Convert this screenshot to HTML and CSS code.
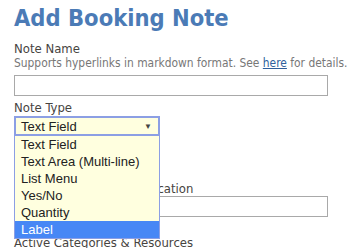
FILE: index.html
```html
<!DOCTYPE html>
<html>
<head>
<meta charset="utf-8">
<link rel="stylesheet" href="styles.css">
</head>
<body>
<div class="page">
  <h1 class="title">Add Booking Note</h1>
  <div class="field">
    <div class="label">Note Name</div>
    <div class="hint">Supports hyperlinks in markdown format. See <a class="link" href="#">here</a> for details.</div>
    <div class="input"></div>
  </div>
  <div class="field field-type">
    <div class="label">Note Type</div>
    <div class="select-wrap">
      <div class="select"><span>Text Field</span><span class="arrow">&#9660;</span></div>
      <ul class="options">
        <li>Text Field</li>
        <li>Text Area (Multi-line)</li>
        <li>List Menu</li>
        <li>Yes/No</li>
        <li>Quantity</li>
        <li class="active">Label</li>
      </ul>
    </div>
  </div>
  <div class="field check-row">
    <span class="box"></span><span class="label">Required</span>
  </div>
  <div class="field field-app">
    <div class="label">Show on Customer Application</div>
    <div class="input"></div>
  </div>
  <div class="field field-active">
    <div class="label">Active Categories &amp; Resources</div>
  </div>
</div>
</body>
</html>
```
FILE: styles.css
```css
html, body {
  margin: 0;
  padding: 0;
  background: #ffffff;
}
.page {
  padding: 4px 0 0 14px;
  font-family: "DejaVu Sans Condensed", "DejaVu Sans", sans-serif;
  color: #545454;
}
.title {
  margin: 0;
  font-size: 23.5px;
  line-height: 29px;
  font-weight: bold;
  color: #4b7bb6;
}
.field {
  margin-top: 8px;
}
.label {
  font-size: 13px;
  line-height: 15px;
  color: #47443f;
  white-space: nowrap;
}
.hint {
  font-size: 11.9px;
  line-height: 14px;
  color: #777777;
  margin-bottom: 5px;
  white-space: nowrap;
}
.link {
  color: #2f5f9c;
  text-decoration: underline;
}
.input {
  width: 312px;
  height: 19px;
  border: 1px solid #a9a9a9;
  background: #fff;
}
.field-type {
  margin-top: 4px;
}
.select-wrap {
  position: relative;
  width: 146px;
  margin-top: 1px;
}
.select {
  box-sizing: border-box;
  height: 20px;
  border: 2px solid #8c9fe4;
  background: #ffffdf;
  display: flex;
  justify-content: space-between;
  align-items: center;
  padding: 0 6px 0 5px;
  font-family: "Liberation Sans", Arial, sans-serif;
  font-size: 13px;
  color: #222;
}
.arrow {
  font-size: 8px;
  color: #444;
}
.options {
  position: absolute;
  left: 0;
  top: 20px;
  z-index: 5;
  box-sizing: border-box;
  width: 146px;
  margin: 0;
  padding: 0;
  list-style: none;
  border: 1px solid #8c9fe4;
  border-top: none;
  background: #ffffdf;
  font-family: "Liberation Sans", Arial, sans-serif;
  font-size: 13px;
  color: #222;
}
.options li {
  height: 17px;
  line-height: 17px;
  padding-left: 6px;
}
.options li.active {
  background: #4787f5;
  color: #fff;
}
.check-row {
  display: flex;
  align-items: center;
  gap: 6px;
  height: 20px;
  margin-top: 14px;
}
.box {
  width: 12px;
  height: 12px;
  border: 1px solid #999;
}
.field-app {
  margin-top: 11px;
}
.field-active {
  margin-top: 18px;
}
```
